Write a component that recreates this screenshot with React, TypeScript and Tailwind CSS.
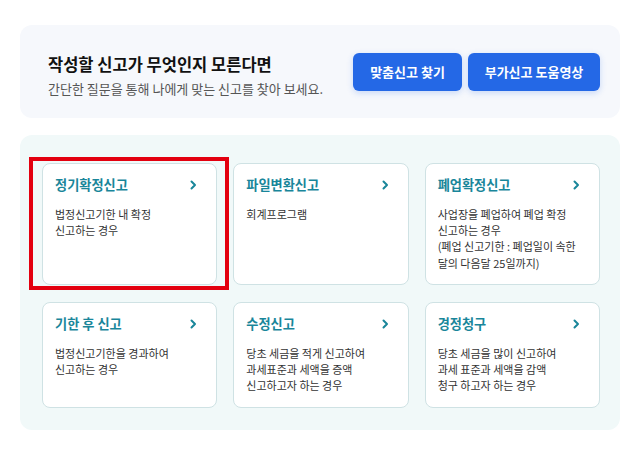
import React from "react";

const font = { fontFamily: '"Noto Sans CJK KR", "Noto Sans", sans-serif' };

type Card = { title: string; lines: string[]; highlight?: boolean };

const cards: Card[] = [
  { title: "정기확정신고", lines: ["법정신고기한 내 확정", "신고하는 경우"], highlight: true },
  { title: "파일변환신고", lines: ["회계프로그램"] },
  {
    title: "폐업확정신고",
    lines: ["사업장을 폐업하여 폐업 확정", "신고하는 경우", "(폐업 신고기한 : 폐업일이 속한", "달의 다음달 25일까지)"],
  },
  { title: "기한 후 신고", lines: ["법정신고기한을 경과하여", "신고하는 경우"] },
  { title: "수정신고", lines: ["당초 세금을 적게 신고하여", "과세표준과 세액을 증액", "신고하고자 하는 경우"] },
  { title: "경정청구", lines: ["당초 세금을 많이 신고하여", "과세 표준과 세액을 감액", "청구 하고자 하는 경우"] },
];

function Chevron() {
  return (
    <svg width="7" height="10" viewBox="0 0 7 10" className="shrink-0">
      <path d="M1.5 1.5L5 5L1.5 8.5" fill="none" stroke="#19869a" strokeWidth="2" strokeLinecap="round" strokeLinejoin="round" />
    </svg>
  );
}

export default function App() {
  return (
    <div className="min-h-[457px] w-[640px] bg-white px-[20px] pt-[25px]" style={font}>
      <div className="flex h-[93px] items-center justify-between rounded-xl bg-[#f6f8fc] pl-[28px] pr-[20px]">
        <div className="mt-[7px] flex flex-col">
          <div className="text-[16.5px] font-bold leading-[22px] text-[#111]">작성할 신고가 무엇인지 모른다면</div>
          <div className="mt-[5px] text-[13px] leading-[18px] text-[#555]">간단한 질문을 통해 나에게 맞는 신고를 찾아 보세요.</div>
        </div>
        <div className="flex gap-[6px]">
          <button className="h-[38px] w-[109px] rounded-md bg-[#2468e6] text-[13px] font-bold text-white shadow-[0_2px_6px_rgba(36,104,230,0.22)]">
            맞춤신고 찾기
          </button>
          <button className="h-[38px] w-[132px] rounded-md bg-[#2468e6] text-[13px] font-bold text-white shadow-[0_2px_6px_rgba(36,104,230,0.22)]">
            부가신고 도움영상
          </button>
        </div>
      </div>

      <div className="mt-[17px] rounded-xl bg-[#f1f9f9] pb-[22px] pl-[22px] pr-[20px] pt-[28px]">
        <div className="grid grid-cols-3 gap-x-[16px] gap-y-[17px]">
          {cards.map((c) => (
            <div key={c.title} className="relative">
              {c.highlight && (
                <div className="pointer-events-none absolute -bottom-[5px] -left-[13px] -right-[12px] -top-[6px] border-4 border-[#e3000f]" />
              )}
              <div className="h-full rounded-lg border border-[#cfe2e4] bg-white pb-[13px] pl-[12px] pr-[19px] pt-[12px]">
                <div className="flex h-[18px] items-center justify-between">
                  <span className="text-[13.2px] font-bold leading-[18px] text-[#19869a]">{c.title}</span>
                  <Chevron />
                </div>
                <div className="mt-[11.5px] text-[11px] leading-[16.4px] text-[#333]">
                  {c.lines.map((l) => (
                    <div key={l}>{l}</div>
                  ))}
                </div>
              </div>
            </div>
          ))}
        </div>
      </div>
    </div>
  );
}
